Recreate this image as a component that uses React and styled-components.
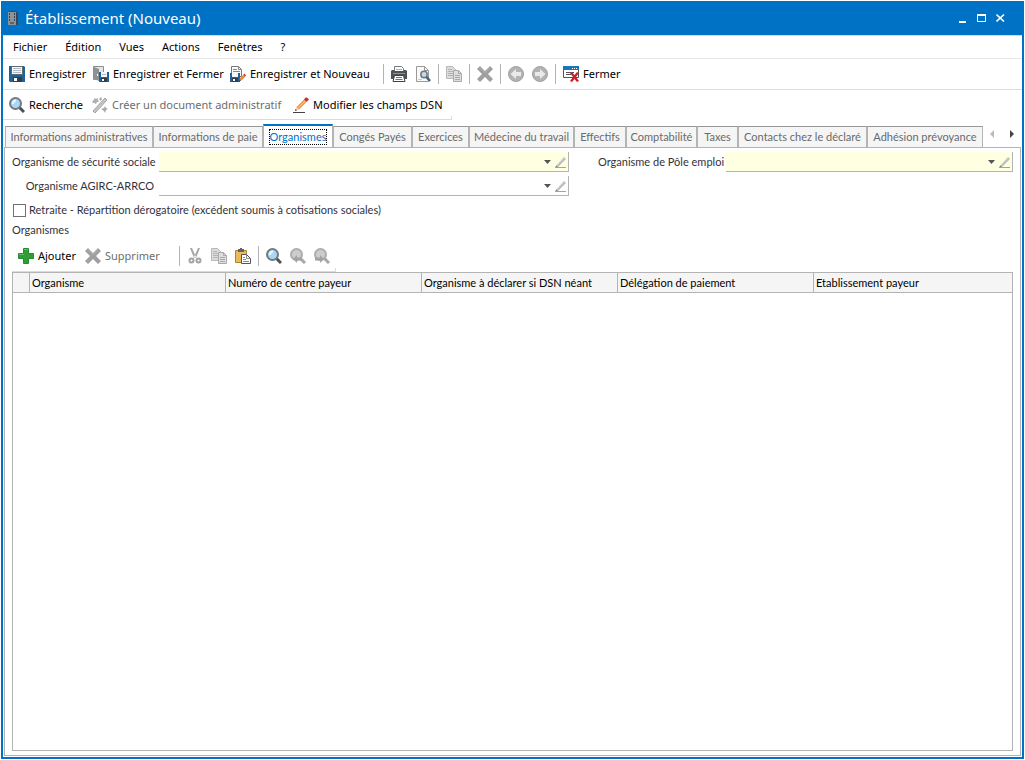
import React, {Fragment} from 'react';
import styled, {createGlobalStyle, css} from 'styled-components';

const icons = {
    server: (
        <Fragment>
            <path d="M4 1h7l2 2v12H4z" fill="#3c4650"/>
            <path d="M3 2h8v13H3z" fill="#8a949c"/>
            <path d="M4 3h6v2H4zM4 6h6v2H4zM4 9h6v2H4z" fill="#3a4249"/>
            <path d="M5 4h4M5 7h4M5 10h4" stroke="#dfe6ea"/>
            <path d="M5 13h4" stroke="#333"/>
        </Fragment>
    ),
    save: (
        <Fragment>
            <path d="M0 0h15l1 1v15H1l-1-1z" fill="#1f6299"/>
            <path d="M2 0h12v9H2z" fill="#5c6a74"/>
            <path d="M3 1h10v7H3z" fill="#f4f6f7"/>
            <path d="M4 2.500h8M4 4.500h8M4 6.500h8" stroke="#b3bbc1"/>
            <path d="M4 11h9v5H4z" fill="#333f48"/>
            <path d="M5 12h3v3H5z" fill="#fff"/>
        </Fragment>
    ),
    saveClose: (
        <Fragment>
            <path d="M.5 .5h10v6h-3v7h-7z" fill="#e4e4e4" stroke="#8a8e90"/>
            <path d="M1 1l5 2v12l-5-2z" fill="#8d9193"/>
            <path d="M4 8h1v2H4z" fill="#fff"/>
            <path d="M6 6h10v10H6z" fill="#1f6299"/>
            <path d="M8 6h6v5H8z" fill="#f4f6f7"/>
            <path d="M9 8.500h4" stroke="#b3bbc1"/>
            <path d="M8 12h6v4H8z" fill="#333f48"/>
            <path d="M9 13h2v2H9z" fill="#fff"/>
        </Fragment>
    ),
    saveNew: (
        <Fragment>
            <path d="M1.500.5h7l3 3v7h-10z" fill="#fafafa" stroke="#777"/>
            <path d="M8.500.5v3h3M3 3.500h4M3 5.500h7" fill="none" stroke="#888"/>
            <path d="M0 7h10v9H0z" fill="#1f6299"/>
            <path d="M2 7h6v4H2z" fill="#f4f6f7"/>
            <path d="M2 12h6v4H2z" fill="#333f48"/>
            <path d="M3 13h2v2H3z" fill="#fff"/>
            <path d="M9 15l1-3 3.500-3.500 2 2L12 14z" fill="#e88b3d"/>
            <path d="M13.500 8.500l1-1L16 9.500l-1 1z" fill="#c9303c"/>
            <path d="M9 15.500l.7-2L11 14.500z" fill="#333"/>
        </Fragment>
    ),
    print: (
        <Fragment>
            <path d="M3.500 5V.5h7l2 2V5" fill="#fff" stroke="#777"/>
            <path d="M1 4h2v1h10V4h2l1 1v8H0V5z" fill="#4d5357"/>
            <path d="M2 7.500h12" stroke="#8c9296"/>
            <path d="M5 3.500h6" stroke="#9fb6c6"/>
            <path d="M3.500 9.500h9l1.500 6H2z" fill="#fff" stroke="#3c4347"/>
            <path d="M5 11.500h6M4.500 13.500h7" stroke="#3682b8"/>
        </Fragment>
    ),
    preview: (
        <Fragment>
            <path d="M1.500.5h8l4 4v11h-12z" fill="#fafafa" stroke="#999"/>
            <path d="M9.500.5v4h4" fill="none" stroke="#999"/>
            <path d="M3 13.500h4" stroke="#ccc"/>
            <circle cx="9" cy="8.500" r="3.200" fill="#b9dcf0" stroke="#777" strokeWidth="1.500"/>
            <path d="M11.500 11l3.500 4" stroke="#44617a" strokeWidth="2.500"/>
        </Fragment>
    ),
    copy: (
        <Fragment>
            <path d="M.5.5h6l3 3v9h-9z" fill="#dcdcdc" stroke="#b8b8b8"/>
            <path d="M2 3.500h4M2 5.500h5M2 7.500h5M2 9.500h5" stroke="#b4b4b4"/>
            <path d="M7.500 4.500h5l3 3v8h-8z" fill="#dedede" stroke="#a9a9a9"/>
            <path d="M12.500 4.500v3h3M9 9.500h5M9 11.500h5M9 13.500h5" fill="none" stroke="#a9a9a9"/>
        </Fragment>
    ),
    cross: (
        <Fragment>
            <path d="M3 0l5 5 5-5 3 3-5 5 5 5-3 3-5-5-5 5-3-3 5-5-5-5z" fill="#9f9f9f"/>
            <path d="M3 1.500l5 5 5-5" stroke="#b5b5b5" fill="none"/>
        </Fragment>
    ),
    prev: (
        <Fragment>
            <circle cx="8" cy="8" r="7.500" fill="#b3b3b3" stroke="#a0a0a0"/>
            <path d="M2.500 8L8 3v3h5v4H8v3z" fill="#e9e9e9"/>
        </Fragment>
    ),
    next: (
        <Fragment>
            <circle cx="8" cy="8" r="7.500" fill="#b3b3b3" stroke="#a0a0a0"/>
            <path d="M13.500 8L8 3v3H3v4h5v3z" fill="#e9e9e9"/>
        </Fragment>
    ),
    close: (
        <Fragment>
            <path d="M.5.5h15v11H.5z" fill="#fff" stroke="#555"/>
            <path d="M0 0h16v4H0z" fill="#1b75bb"/>
            <path d="M9 2h1v1H9zM11 2h1v1h-1zM13 2h1v1h-1z" fill="#fff"/>
            <path d="M3 6.500h8M3 8.500h5" stroke="#555"/>
            <path d="M7 7l2-1 2.500 3L14 6l2 1-3 4 3 4-2 1-2.500-3L9 16l-2-1 3-4z" fill="#c8202f"/>
        </Fragment>
    ),
    search: (
        <Fragment>
            <path d="M10.500 10.500l4.500 4.500" stroke="#4a5258" strokeWidth="3"/>
            <circle cx="6.500" cy="6.500" r="5.500" fill="#a8d8f4" stroke="#747b80" strokeWidth="2"/>
            <path d="M4 7a3 3 0 0 1 3-3.500" fill="none" stroke="#effaff" strokeWidth="2"/>
        </Fragment>
    ),
    wand: (
        <Fragment>
            <path d="M1 14L13 1l2 2L3 16z" fill="#c4c4c4" stroke="#a5a5a5"/>
            <path d="M0 4l2-1V1l2 1 2-1v2l1 2H5L4 7 2 6H0l1-1z" fill="#b0b0b0"/>
            <path d="M7 2l2-2 1 2-1 2zM9 12l3-1 1-2 1 2 2 1-2 1-1 3-1-2z" fill="#aaa"/>
        </Fragment>
    ),
    pencil: (
        <Fragment>
            <path d="M2 13.500L3.500 10 11 2.500 13.500 5 6 12.500z" fill="#eb9a4b"/>
            <path d="M4.500 11.500l8-8" stroke="#f7c58e"/>
            <path d="M11 2.500l1.500-2h1.500L16 2.500 13.500 5z" fill="#c9303c"/>
            <path d="M2 13.500L3.500 10 6 12.500z" fill="#f3dcbf"/>
            <path d="M2 14l.7-2L4 13.300z" fill="#333"/>
            <path d="M0 15.500h12" stroke="#444"/>
        </Fragment>
    ),
    plus: (
        <Fragment>
            <path d="M5.500.5h5v5h5v5h-5v5h-5v-5h-5v-5h5z" fill="#2f9e35" stroke="#288a2e"/>
            <path d="M6 1.500h4M1 6.500h5" stroke="#63bd67"/>
        </Fragment>
    ),
    cut: (
        <Fragment>
            <path d="M3 0h2l4 9-2 1zM13 0h-2L7 9l2 1z" fill="#a6a6a6"/>
            <circle cx="4.500" cy="12.500" r="2" fill="none" stroke="#a3a3a3" strokeWidth="2"/>
            <circle cx="11.500" cy="12.500" r="2" fill="none" stroke="#a3a3a3" strokeWidth="2"/>
        </Fragment>
    ),
    paste: (
        <Fragment>
            <path d="M.5 2.500h11v12H.5z" fill="#e9b95c" stroke="#b08432"/>
            <path d="M3 1h2V0h2v1h2v3H3z" fill="#5d6468"/>
            <path d="M6.500 6.500h5l4 4v5h-9z" fill="#fff" stroke="#555"/>
            <path d="M11.500 6.500v4h4M8 9.500h2M8 11.500h3M8 13.500h6" fill="none" stroke="#888"/>
        </Fragment>
    ),
    searchPrev: (
        <Fragment>
            <circle cx="6.500" cy="6.500" r="5.500" fill="#cdcdcd" stroke="#adadad" strokeWidth="2"/>
            <path d="M10 10l5 5" stroke="#a8a8a8" strokeWidth="3"/>
            <path d="M3 11l4-4v2.500h4v3H7V15z" fill="#a3a3a3"/>
        </Fragment>
    ),
    searchNext: (
        <Fragment>
            <circle cx="6.500" cy="6.500" r="5.500" fill="#cdcdcd" stroke="#adadad" strokeWidth="2"/>
            <path d="M10 10l5 5" stroke="#a8a8a8" strokeWidth="3"/>
            <path d="M10 11L6 7v2.500H1v3h5V15z" fill="#a3a3a3"/>
        </Fragment>
    ),
    edit: (
        <Fragment>
            <path d="M5 12l8-9 2 2-8 8z" fill="#bdbdbd"/>
            <path d="M5.500 11.500L13.500 3" stroke="#dcdcdc"/>
            <path d="M4.500 13.500L5 11.500 7 13z" fill="#777"/>
            <path d="M4 13.500h11" stroke="#a3a3a3"/>
        </Fragment>
    )
}

const menus = ['Fichier', 'Édition', 'Vues', 'Actions', 'Fenêtres', '?']

const tabs = [
    {title: 'Informations administratives', width: 148},
    {title: 'Informations de paie', width: 110},
    {title: 'Organismes', width: 70, active: true},
    {title: 'Congés Payés', width: 79},
    {title: 'Exercices', width: 57},
    {title: 'Médecine du travail', width: 105},
    {title: 'Effectifs', width: 52},
    {title: 'Comptabilité', width: 71},
    {title: 'Taxes', width: 41},
    {title: 'Contacts chez le déclaré', width: 129},
    {title: 'Adhésion prévoyance', width: 116}
]

const columns = [
    {title: 'Organisme', width: 196},
    {title: 'Numéro de centre payeur', width: 196},
    {title: 'Organisme à déclarer si DSN néant', width: 196},
    {title: 'Délégation de paiement', width: 196},
    {title: 'Etablissement payeur'}
]

const Icon = ({name}) => (
    <IconBox viewBox="0 0 16 16" aria-hidden="true">{icons[name]}</IconBox>
)

const Tool = ({icon, label, title, width, disabled}) => (
    <ToolButton type="button" disabled={disabled} $width={width} aria-label={label || title}>
        <Icon name={icon}/>
        {label}
    </ToolButton>
)

const Lookup = ({id, label, required, grow}) => (
    <FieldGroup $grow={grow}>
        <FieldLabel htmlFor={id} $wide={grow > 500}>{label}</FieldLabel>
        <LookupBox $required={required}>
            <LookupInput id={id} type="text"/>
            <LookupButton type="button" aria-label="Ouvrir la liste">
                <svg width="7" height="4"><path d="M0 0h7L3.500 4z" fill="#555"/></svg>
            </LookupButton>
            <LookupButton type="button" aria-label="Modifier">
                <Icon name="edit"/>
            </LookupButton>
        </LookupBox>
    </FieldGroup>
)

const App = () => (
    <Fragment>
        <GlobalStyle/>
        <Window>
            <TitleBar>
                <Icon name="server"/>
                <Title>Établissement (Nouveau)</Title>
                <WindowButton type="button" aria-label="Réduire">
                    <svg width="10" height="10"><path d="M1 8h7v2H1z" fill="#fff"/></svg>
                </WindowButton>
                <WindowButton type="button" aria-label="Agrandir">
                    <svg width="10" height="10"><path d="M.5 2v6.500h8V2" fill="none" stroke="#fff"/><path d="M0 1h9v2H0z" fill="#fff"/></svg>
                </WindowButton>
                <WindowButton type="button" aria-label="Fermer la fenêtre">
                    <svg width="10" height="10"><path d="M.5 1.500l7.500 7M8 1.500l-7.500 7" stroke="#fff" strokeWidth="1.700"/></svg>
                </WindowButton>
            </TitleBar>
            <MenuBar>
                {menus.map(m => <MenuItem key={m} type="button">{m}</MenuItem>)}
            </MenuBar>
            <ToolBar>
                <Tool icon="save" label="Enregistrer" width={76}/>
                <Tool icon="saveClose" label="Enregistrer et Fermer" width={129}/>
                <Tool icon="saveNew" label="Enregistrer et Nouveau" width={146}/>
                <Separator/>
                <Tool icon="print" title="Imprimer"/>
                <Tool icon="preview" title="Aperçu"/>
                <Separator/>
                <Tool icon="copy" title="Dupliquer" disabled/>
                <Separator/>
                <Tool icon="cross" title="Supprimer" disabled/>
                <Separator/>
                <Tool icon="prev" title="Précédent" disabled/>
                <Tool icon="next" title="Suivant" disabled/>
                <Separator/>
                <Tool icon="close" label="Fermer"/>
            </ToolBar>
            <ShortToolBar>
                <Tool icon="search" label="Recherche" width={75}/>
                <Tool icon="wand" label="Créer un document administratif" width={193} disabled/>
                <Tool icon="pencil" label="Modifier les champs DSN" width={153}/>
            </ShortToolBar>
            <Main>
                <TabStrip>
                    <TabList role="tablist">
                        {tabs.map(t => (
                            <Tab key={t.title}
                                 type="button"
                                 role="tab"
                                 aria-selected={!!t.active}
                                 $active={t.active}
                                 $width={t.width}
                            >
                                <span>{t.title}</span>
                            </Tab>
                        ))}
                    </TabList>
                    <TabArrow type="button" aria-label="Onglets précédents" disabled>
                        <svg width="4" height="8"><path d="M4 0v8L0 4z" fill="#bbb"/></svg>
                    </TabArrow>
                    <TabArrow type="button" aria-label="Onglets suivants">
                        <svg width="4" height="8"><path d="M0 0v8l4-4z" fill="#444"/></svg>
                    </TabArrow>
                </TabStrip>
                <Panel>
                    <FormRow>
                        <Lookup id="secu" label="Organisme de sécurité sociale" required grow={557}/>
                        <Lookup id="pole" label="Organisme de Pôle emploi" required grow={415}/>
                    </FormRow>
                    <FormRow>
                        <Lookup id="agirc" label="Organisme AGIRC-ARRCO" grow={557}/>
                        <FieldGroup $grow={415}/>
                    </FormRow>
                    <CheckLabel>
                        <CheckBox type="checkbox"/>
                        Retraite - Répartition dérogatoire (excédent soumis à cotisations sociales)
                    </CheckLabel>
                    <SectionTitle>Organismes</SectionTitle>
                    <GridToolBar>
                        <Tool icon="plus" label="Ajouter" width={59}/>
                        <Tool icon="cross" label="Supprimer" width={87} disabled/>
                        <Separator/>
                        <Tool icon="cut" title="Couper" disabled/>
                        <Tool icon="copy" title="Copier" disabled/>
                        <Tool icon="paste" title="Coller"/>
                        <Separator/>
                        <Tool icon="search" title="Rechercher"/>
                        <Tool icon="searchPrev" title="Rechercher le précédent" disabled/>
                        <Tool icon="searchNext" title="Rechercher le suivant" disabled/>
                    </GridToolBar>
                    <GridBox>
                        <Grid>
                            <thead>
                                <tr>
                                    <HeadCell $width={17}/>
                                    {columns.map(c => <HeadCell key={c.title} $width={c.width}>{c.title}</HeadCell>)}
                                </tr>
                            </thead>
                        </Grid>
                    </GridBox>
                </Panel>
            </Main>
        </Window>
    </Fragment>
)

const GlobalStyle = createGlobalStyle`
  * {
    box-sizing: border-box;
  }

  body {
    margin: 1px;
    background: #fff;
    font: 11px/14px Lato, sans-serif;
    color: #32323c;
  }

  button, input {
    font: inherit;
    color: inherit;
    margin: 0;
    padding: 0;
    border: 0;
    background: none;
  }
`

const Window = styled.div`
  min-height: calc(100vh - 2px);
  display: flex;
  flex-flow: column nowrap;
  border: 2px solid #0072c6;
  border-top: 0;
`

const TitleBar = styled.header`
  height: 35px;
  padding: 0 16px 0 2px;
  display: flex;
  align-items: center;
  background: #0072c6;
  border-bottom: 1px solid #d5dbe0;
  color: #fff;
`

const Title = styled.h1`
  flex: 1;
  margin: 0 0 0 4px;
  font: 15px/22px "Noto Sans", sans-serif;
  white-space: nowrap;
`

const WindowButton = styled.button`
  display: flex;
  margin-left: 9px;
`

const IconBox = styled.svg`
  width: 16px;
  height: 16px;
  flex: none;
`

const MenuBar = styled.nav`
  height: 23px;
  padding: 0 10px;
  display: flex;
  align-items: center;
  gap: 18px;
  border-bottom: 1px solid #e6e6e6;
`

const MenuItem = styled.button`
  font: 11px/16px "Noto Sans", sans-serif;
  color: #000;
`

const ToolBar = styled.div`
  height: 31px;
  padding: 0 6px;
  display: flex;
  align-items: center;
  gap: 8px;
  border-bottom: 1px solid #dcdcdc;
`

const ShortToolBar = styled(ToolBar)`
  height: 30px;
  width: fit-content;
  padding-right: 0;

  &::after {
    content: '';
    align-self: flex-end;
    width: 1px;
    height: 3px;
    margin-left: -3px;
    background: #dcdcdc;
  }
`

const ToolButton = styled.button`
  display: flex;
  align-items: center;
  gap: 4px;
  width: ${p => p.$width ? p.$width + 'px' : 'auto'};
  font: 11px/16px "Noto Sans", sans-serif;
  color: #000;
  white-space: nowrap;

  &:disabled {
    color: #6d6d6d;
  }
`

const Separator = styled.span`
  width: 1px;
  height: 20px;
  margin: 0 -1px;
  background: #b4b4b4;
`

const Main = styled.main`
  flex: 1;
  display: flex;
  flex-flow: column nowrap;
  padding: 0 1px 1px;
`

const TabStrip = styled.div`
  height: 28px;
  padding: 0 7px 0 1px;
  display: flex;
  align-items: center;
  gap: 7px;
`

const TabList = styled.div`
  flex: 1;
  align-self: flex-end;
  display: flex;
  align-items: flex-end;
`

const Tab = styled.button`
  flex: none;
  height: 22px;
  width: ${p => p.$width}px;
  border: 1px solid #b4b4b4;
  border-top-color: #989898;
  background: #f5f5f5;
  color: #6a6a6a;
  white-space: nowrap;
  display: flex;
  align-items: center;
  justify-content: center;

  ${p => p.$active && css`
    height: 24px;
    border-top: 2px solid #0072c6;
    border-bottom: 0;
    background: #fff;
    color: #0072c6;

    span {
      outline: 1px dotted #000;
    }
  `}
`

const TabArrow = styled.button`
  display: flex;

  & + & {
    margin-left: 9px;
  }
`

const Panel = styled.section`
  flex: 1;
  display: flex;
  flex-flow: column nowrap;
  margin-top: -1px;
  padding: 4px 7px;
  border: 1px solid #b4b4b4;
`

const FormRow = styled.div`
  height: 24px;
  display: flex;
  gap: 29px;
`

const FieldGroup = styled.div`
  flex: ${p => p.$grow} 1 0;
  display: flex;
  align-items: flex-start;
  gap: 5px;
`

const FieldLabel = styled.label`
  width: ${p => p.$wide ? 142 : 123}px;
  line-height: 20px;
  text-align: right;
  white-space: nowrap;
`

const LookupBox = styled.div`
  flex: 1;
  height: 20px;
  padding-right: 1px;
  display: flex;
  align-items: center;
  border-bottom: 1px solid #b4b4b4;
  border-right: 1px solid #b4b4b4;
  background: ${p => p.$required ? '#ffffe1' : '#fff'};
`

const LookupInput = styled.input`
  flex: 1;
  min-width: 0;
  height: 19px;
  outline: none;
`

const LookupButton = styled.button`
  display: flex;
`

const CheckLabel = styled.label`
  height: 20px;
  display: flex;
  align-items: center;
  gap: 3px;
`

const CheckBox = styled.input`
  appearance: none;
  width: 13px;
  height: 13px;
  margin-left: 1px;
  border: 1px solid #707070;
  background: #fff;
`

const SectionTitle = styled.h2`
  height: 20px;
  margin: 0;
  font: inherit;
  line-height: 20px;
`

const GridToolBar = styled(ShortToolBar)`
  height: 32px;
`

const GridBox = styled.div`
  flex: 1;
  border: 1px solid #b4b4b4;
`

const Grid = styled.table`
  width: 100%;
  table-layout: fixed;
  border-collapse: separate;
  border-spacing: 0;
`

const HeadCell = styled.th`
  width: ${p => p.$width ? p.$width + 'px' : 'auto'};
  height: 20px;
  padding: 0 2px;
  border-bottom: 1px solid #b4b4b4;
  border-right: 1px solid #b4b4b4;
  background: #f5f5f5;
  color: #000;
  font-weight: normal;
  text-align: left;
  white-space: nowrap;

  &:last-child {
    border-right: 0;
  }
`

export default App
